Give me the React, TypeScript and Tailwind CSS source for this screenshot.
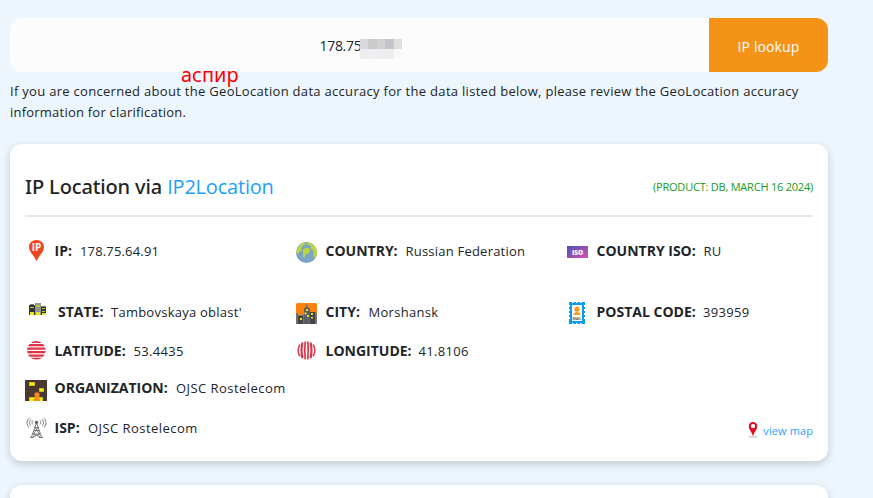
import type { ReactNode } from "react";

const font = "font-['Open_Sans','Noto_Sans',sans-serif]";

function PinIpIcon() {
  return (
    <svg width="22" height="22" viewBox="0 0 22 22">
      <path d="M11.500 0C7.200 0 4 3 4 7c0 4.700 4.800 8.200 7.500 14.200C14.300 15.200 19 11.700 19 7c0-4-3.200-7-7.500-7z" fill="#ee4522" />
      <text x="11.500" y="10.800" textAnchor="middle" fontSize="10" fontWeight="700" fill="#fff">IP</text>
    </svg>
  );
}

function GlobeIcon() {
  return (
    <svg width="22" height="22" viewBox="0 0 22 22" className="mt-[2px]">
      <circle cx="10.500" cy="10.500" r="10.500" fill="#7ba3c4" />
      <path d="M.2 11.500C.2 7 3.500 1.800 8 .4l1.500 1.800L6.500 4 5 6.500l1 2-2.500 1-1.500 2.500z" fill="#bcd545" />
      <path d="M10.500 0c5 0 9.300 3.600 10.300 8.300l.1 4.200-2 4-1.800-3.500.4-4-3-2.500.5-2.500-3.500-1.500z" fill="#bcd545" />
      <path d="M6.500 8.200L9.200 5.800l3.300.2 1.800 2.500-1.500 2.800-3 1-.9 3.200L6.500 14.300l.8-3z" fill="#bcd545" />
    </svg>
  );
}

function IsoIcon() {
  return (
    <svg width="22" height="22" viewBox="0 0 22 22" className="mt-px">
      <defs>
        <linearGradient id="iso" x1="0" y1="0" x2="1" y2="1">
          <stop offset="0" stopColor="#4c50b8" />
          <stop offset="1" stopColor="#dd4fad" />
        </linearGradient>
      </defs>
      <rect x="0" y="5" width="21" height="12" fill="url(#iso)" />
      <text x="10.500" y="13.600" textAnchor="middle" fontSize="6.500" fontWeight="800" fill="#fff">ISO</text>
    </svg>
  );
}

function StateIcon() {
  return (
    <svg width="22" height="22" viewBox="0 0 22 22">
      <path d="M4 4h6v10H4z" fill="#33363a" />
      <path d="M10 2h6v12h-6z" fill="#929297" />
      <path d="M16 5h5v9h-5z" fill="#33363a" />
      <path d="M5 3h4v1H5zM16 5h5v1h-5z" fill="#777" />
      <path d="M5 6h4v1H5zM11 4h4v2h-4zM17 7h3v1h-3zM17 10h3v1h-3z" fill="#bfc526" />
      <path d="M5 11h4v3H5zM11 11h4v3h-4zM17 12h4v2h-4z" fill="#e7e61a" />
    </svg>
  );
}

function CityIcon() {
  return (
    <svg width="22" height="22" viewBox="0 0 22 22" className="mt-[2px]">
      <rect width="21" height="21" rx="1.500" fill="#fb820e" />
      <path d="M0 10h2v2h6V6l2-2 .7-3 .7 3L14 6v3h6v2h1v10H0z" fill="#707277" />
      <path d="M8 12V6l2-2 .7-3 .7 3L14 6v6l-1 9H8z" fill="#5b5d62" />
      <path d="M2 13h5v8H2zM14 9h5v12h-5z" fill="#424448" />
      <path d="M10 6h2v2h-2zM8.500 9.500h2v2h-2zM11 12h2v2h-2zM4 15h2v2H4zM15 10h2v2h-2zM15 14h2v1.500h-2z" fill="#f4df22" />
    </svg>
  );
}

function PostalIcon() {
  return (
    <svg width="22" height="22" viewBox="0 0 22 22" className="mt-px">
      <path d="M2 0h16v22H2z" fill="#0c9bea" />
      <path d="M5 3h10v16H5z" fill="#fff" />
      <path d="M5 0h1.500v1H5zM9 0h1.500v1H9zM13 0h1.500v1H13zM5 21h1.500v1H5zM9 21h1.500v1H9zM13 21h1.500v1H13zM2 3h1v2H2zM2 7h1v2H2zM2 11h1v2H2zM2 15h1v2H2zM17 3h1v2h-1zM17 7h1v2h-1zM17 11h1v2h-1zM17 15h1v2h-1z" fill="#fff" />
      <circle cx="10" cy="7.200" r="2.600" fill="#fa9a27" />
      <path d="M6.500 13v-1.500L9 10h2l2.500 1.500V13z" fill="#fa9a27" />
      <text x="10" y="17.800" textAnchor="middle" fontSize="3.700" fontWeight="600" fill="#333">MAIL</text>
    </svg>
  );
}

function LatitudeIcon() {
  return (
    <svg width="22" height="22" viewBox="0 0 22 22">
      <defs><clipPath id="lat"><circle cx="11.300" cy="10.300" r="9.400" /></clipPath></defs>
      <path clipPath="url(#lat)" d="M1 1h21v2H1zM1 4h21v2.300H1zM1 7.500h21v2.300H1zM1 11h21v2.300H1zM1 14.500h21v2.300H1zM1 17.800h21v2H1z" fill="#df3447" />
    </svg>
  );
}

function LongitudeIcon() {
  return (
    <svg width="22" height="22" viewBox="0 0 22 22" fill="none" stroke="#df3447">
      <path d="M4 4.500C1.700 8 1.700 12.800 4 16.300M17 4.500c2.300 3.500 2.300 8.300 0 11.800" strokeWidth="1.400" />
      <path d="M6.500 2.500c-1.300 5.200-1.300 10.600 0 15.800M14.500 2.500c1.300 5.200 1.300 10.600 0 15.800" strokeWidth="2.200" />
      <path d="M9.200 1.500c-.6 6-.6 11.800 0 17.800M11.800 1.500c.6 6 .6 11.800 0 17.800" strokeWidth="1.700" />
    </svg>
  );
}

function OrganizationIcon() {
  return (
    <svg width="22" height="22" viewBox="0 0 22 22" className="mt-[3px]">
      <rect width="22" height="21" fill="#4a3832" />
      <path d="M4 2h6v4H4zM14 8h5v4h-5zM4 17h14v4H4z" fill="#c9ba1c" />
      <path d="M5 3h4v2H5zM15 9h3v2h-3zM5 18h12v3H5z" fill="#fff000" />
      <path d="M9.500 13.500l1-1h3l1 1v3L13 18l2 1v2H8.500v-2l2.200-1-1.200-1.500z" fill="#fa8723" />
    </svg>
  );
}

function TowerIcon() {
  return (
    <svg width="22" height="22" viewBox="0 0 22 22" fill="none" stroke="#666b70" strokeWidth=".9">
      <path d="M4.500 1C1.300 3.500 1.300 7.500 4 10.500M6.200 2.300C4 4.200 4 6.800 5.800 8.800M8 3.500C6.800 4.700 6.800 6.200 7.800 7.400M18.500 1c3.200 2.500 3.200 6.500.5 9.500M16.800 2.300c2.200 1.900 2.200 4.500.4 6.500M15 3.500c1.200 1.200 1.200 2.700.2 3.900" />
      <circle cx="11.500" cy="5.500" r="1.400" fill="#555b61" />
      <path d="M11 7L6.500 20M12 7l4.500 13M10 10.500h3M9 13.500h5M8 17h7M10 10.500L14.500 17M13 10.500L8.500 17M8 17l7.500 3M15 17l-7.500 3M5 20.500h4M14 20.500h4" />
    </svg>
  );
}

function MapPinIcon() {
  return (
    <svg width="10" height="16" viewBox="0 0 10 16" className="-mt-[3px]">
      <path d="M.5 15h9" stroke="#bbb" />
      <path d="M5 0C2.500 0 .8 1.800.8 4.200.8 7.500 3.800 9.500 5 14.500c1.200-5 4.200-7 4.200-10.300C9.200 1.800 7.500 0 5 0z" fill="#e30920" />
      <circle cx="5" cy="4.100" r="2.200" fill="#fff" />
    </svg>
  );
}

type FieldProps = { icon: ReactNode; label: string; value: string; labelClass: string; valueClass: string };

function Field({ icon, label, value, labelClass, valueClass }: FieldProps) {
  return (
    <div className="flex h-[22px] items-center whitespace-nowrap text-sm leading-[22px]">
      <span className="mr-[7.500px] size-[22px] shrink-0">{icon}</span>
      <span className={`shrink-0 font-bold ${labelClass}`}>{label}</span>
      <span className={`text-[13px] ${valueClass}`}>{value}</span>
    </div>
  );
}

const mosaic = [
  "bg-[#d8d8df]", "bg-[#cbcbcb]", "bg-[#d2d2d2]", "bg-[#c4c4ca]", "bg-[#dfdfdd]",
  "bg-[#eeeeee]", "bg-[#eff0f4]", "bg-[#ededed]", "bg-[#eeeeee]", "bg-[#f8f8f6]",
];

export default function App() {
  return (
    <div className={`h-[498px] w-[873px] overflow-hidden bg-[#eef6fd] pl-[10px] pt-[18px] text-[#212529] ${font}`}>
      <div className="w-[818px]">
        <div className="relative flex h-[54px]">
          <div className="flex flex-1 items-center rounded-l-xl bg-[#fcfcfc] pl-[309.500px]">
            <span className="w-[40.500px] overflow-hidden whitespace-nowrap pt-[2px] text-sm tracking-[-0.3px]">178.75</span>
            <div className="mt-[8px] grid w-[42px] grid-cols-5">
              {mosaic.map((c, i) => <span key={i} className={`h-[10px] ${c}`} />)}
            </div>
          </div>
          <button className="w-[119px] rounded-r-xl bg-[#f59319] pt-1 text-sm tracking-[0.1px] text-white">IP lookup</button>
          <span className="absolute left-[171px] top-[43px] font-['Noto_Sans'] text-[20px] leading-7 text-[#ff0000]">аспир</span>
        </div>
        <p className="mt-[9px] whitespace-nowrap text-[13px] leading-[21px]">
          <span className="block tracking-[0.3px]">If you are concerned about the GeoLocation data accuracy for the data listed below, please review the GeoLocation accuracy</span>
          <span className="block tracking-[0.22px]">information for clarification.</span>
        </p>
        <section className="mt-[21px] h-[317px] rounded-xl bg-white px-[15px] shadow-[0_3px_8px_rgba(0,0,0,0.18)]">
          <header className="flex h-[73px] items-center justify-between border-b-2 border-[#e6e6e6] pt-[14px]">
            <h1 className="whitespace-nowrap font-['Noto_Sans','Open_Sans',sans-serif] text-[20px] font-medium leading-6 tracking-[-0.13px]">
              IP Location via <a className="font-['Open_Sans'] font-normal tracking-[-0.2px] text-[#1e9fff]">IP2Location</a>
            </h1>
            <span className="whitespace-nowrap pt-[2px] text-[11px] tracking-[-0.22px] text-[#159a25]">(PRODUCT: DB, MARCH 16 2024)</span>
          </header>
          <div className="mt-[23px] grid grid-cols-[271px_271px_246px]">
            <Field icon={<PinIpIcon />} label="IP:" value="178.75.64.91" labelClass="w-[25.500px]" valueClass="tracking-[0.16px]" />
            <Field icon={<GlobeIcon />} label="COUNTRY:" value="Russian Federation" labelClass="w-[80px]" valueClass="tracking-[0.22px]" />
            <Field icon={<IsoIcon />} label="COUNTRY ISO:" value="RU" labelClass="w-[107px]" valueClass="tracking-[0.2px]" />
          </div>
          <div className="mt-[39px] grid grid-cols-[271px_271px_246px]">
            <Field icon={<StateIcon />} label="STATE:" value="Tambovskaya oblast'" labelClass="pl-[3.500px] w-[56.500px]" valueClass="tracking-[0.25px]" />
            <Field icon={<CityIcon />} label="CITY:" value="Morshansk" labelClass="w-[43px]" valueClass="tracking-[0.28px]" />
            <Field icon={<PostalIcon />} label="POSTAL CODE:" value="393959" labelClass="w-[106.500px]" valueClass="tracking-[0.3px]" />
          </div>
          <div className="mt-[17px] grid grid-cols-[271px_271px_246px]">
            <Field icon={<LatitudeIcon />} label="LATITUDE:" value="53.4435" labelClass="w-[79px]" valueClass="tracking-[0.3px]" />
            <Field icon={<LongitudeIcon />} label="LONGITUDE:" value="41.8106" labelClass="w-[93px]" valueClass="tracking-[0.3px]" />
          </div>
          <div className="mt-[15px]">
            <Field icon={<OrganizationIcon />} label="ORGANIZATION:" value="OJSC Rostelecom" labelClass="w-[121.500px]" valueClass="tracking-[0.46px]" />
          </div>
          <div className="mt-[18px] flex justify-between">
            <Field icon={<TowerIcon />} label="ISP:" value="OJSC Rostelecom" labelClass="w-[33.500px]" valueClass="tracking-[0.46px]" />
            <a className="mt-[5px] flex h-[18px] items-center gap-[5px] whitespace-nowrap text-[11px] tracking-[0.1px] text-[#1e9fff]"><MapPinIcon />view map</a>
          </div>
        </section>
        <section className="mt-6 h-20 rounded-xl bg-white shadow-[0_3px_8px_rgba(0,0,0,0.18)]" />
      </div>
    </div>
  );
}
